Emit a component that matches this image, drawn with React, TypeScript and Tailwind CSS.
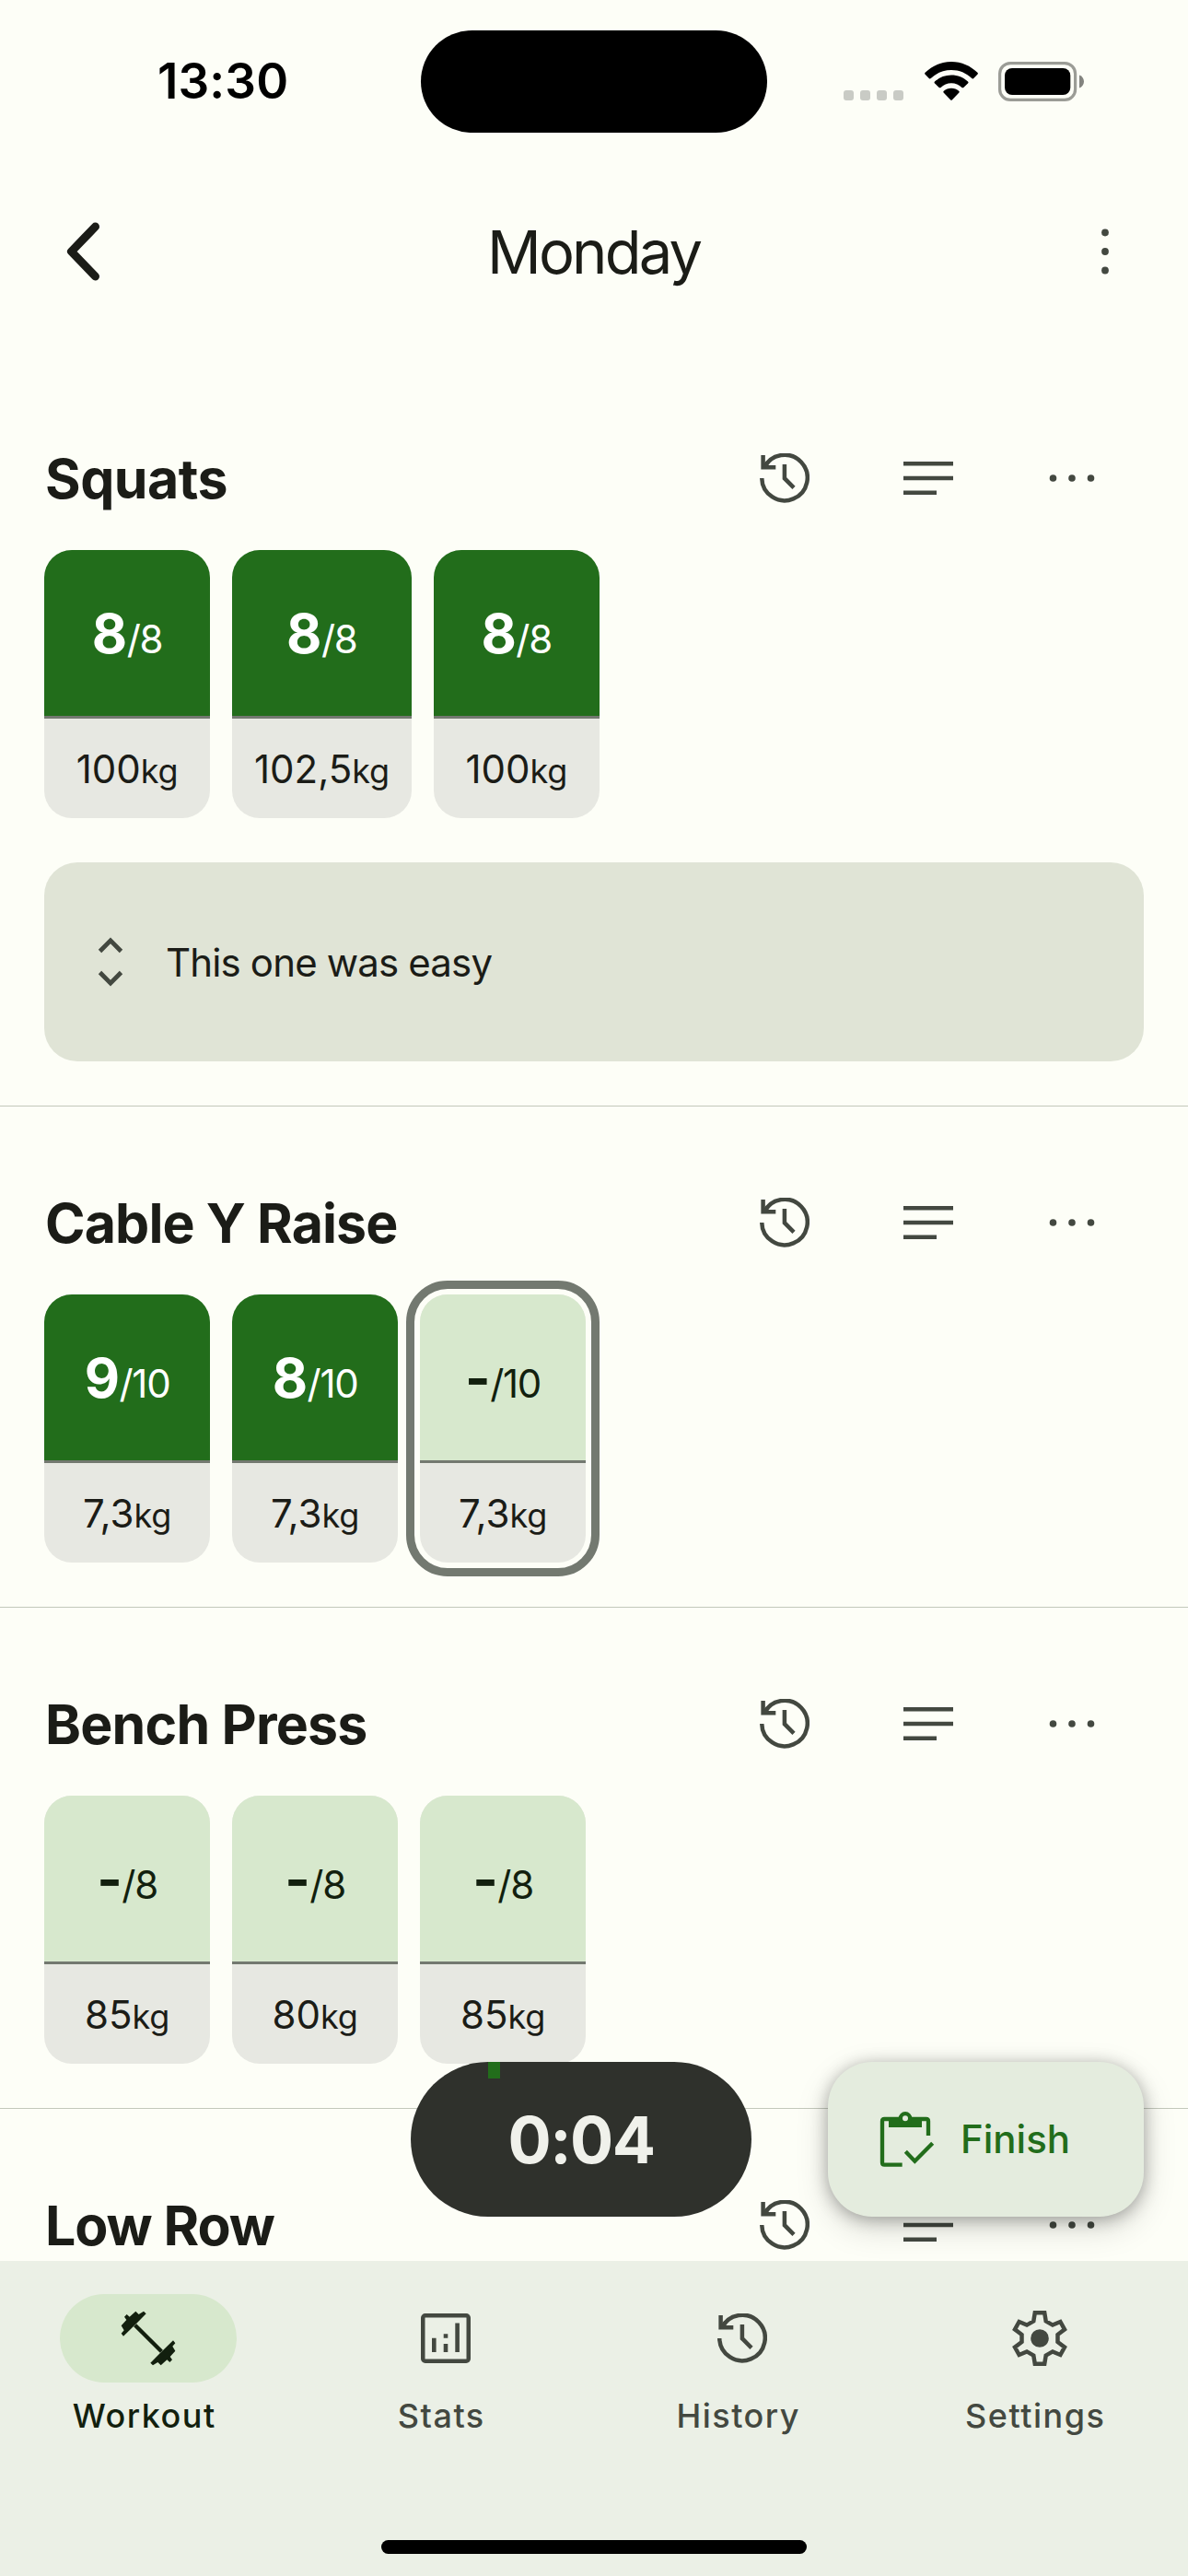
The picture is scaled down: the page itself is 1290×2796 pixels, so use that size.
import type { ReactNode } from "react";

type WorkoutSet = { done: string; goal: string; weight: string; active?: boolean };
type Exercise = { name: string; tracking: string; sets: WorkoutSet[]; note?: string };

const exercises: Exercise[] = [
  {
    name: "Squats",
    tracking: "tracking-[-0.5px]",
    sets: [
      { done: "8", goal: "8", weight: "100" },
      { done: "8", goal: "8", weight: "102,5" },
      { done: "8", goal: "8", weight: "100" },
    ],
    note: "This one was easy",
  },
  {
    name: "Cable Y Raise",
    tracking: "tracking-[-0.9px]",
    sets: [
      { done: "9", goal: "10", weight: "7,3" },
      { done: "8", goal: "10", weight: "7,3" },
      { done: "-", goal: "10", weight: "7,3", active: true },
    ],
  },
  {
    name: "Bench Press",
    tracking: "tracking-[-0.8px]",
    sets: [
      { done: "-", goal: "8", weight: "85" },
      { done: "-", goal: "8", weight: "80" },
      { done: "-", goal: "8", weight: "85" },
    ],
  },
  { name: "Low Row", tracking: "tracking-[-1.1px]", sets: [] },
];

function HistoryIcon() {
  return (
    <svg width="54" height="54" viewBox="0 0 54 54" fill="none" stroke="currentColor" strokeWidth="4.5">
      <path d="M2.25 27A24.75 24.75 0 1 0 4.6 16" />
      <path d="M3.6 2V15.3H17.3" />
      <path d="M5 15L9 9.5" />
      <path d="M26.9 12V27.2L37 37.3" />
    </svg>
  );
}

function NotesIcon() {
  return (
    <svg width="54" height="36" viewBox="0 0 54 36" fill="currentColor">
      <path d="M0 0H54V4.5H0ZM0 15.75H54V20.25H0ZM0 31.5H36V36H0Z" />
    </svg>
  );
}

function DotsIcon() {
  return (
    <svg width="50" height="8" viewBox="0 0 50 8" fill="currentColor">
      <circle cx="4.5" cy="4" r="3.8" />
      <circle cx="25" cy="4" r="3.8" />
      <circle cx="45.5" cy="4" r="3.8" />
    </svg>
  );
}

function DumbbellIcon() {
  const head = "112,86 122,96 138,86 146,94 118,122 72,167 65,158 74,148 65,133 82,114 75,104 83,96 92,104";
  return (
    <svg width="60" height="60" viewBox="63 84 180 180" fill="currentColor">
      <polygon points={head} />
      <polygon points={head} transform="rotate(180 153 174)" />
      <path d="M110 131L196 217" stroke="currentColor" strokeWidth="13" />
    </svg>
  );
}

function StatsIcon() {
  return (
    <svg width="54" height="54" viewBox="0 0 54 54" fill="currentColor">
      <rect x="2.25" y="2.25" width="49.5" height="49.5" rx="2.5" fill="none" stroke="currentColor" strokeWidth="4.5" />
      <path d="M12 26.8h4.6V42H12ZM24.7 22.2h4.6v4.6h-4.6ZM24.7 33h4.6v9h-4.6ZM37.3 10.5h4.6V42h-4.6Z" />
    </svg>
  );
}

function GearIcon() {
  return (
    <svg width="60" height="60" viewBox="-30 -30 60 60" fill="currentColor">
      <path
        d="M-5.2-27.75H5.2L6.7-18.6L14-14.4L22.4-18L27-9.7L19.5-4V4L27 9.7L22.4 18L14 14.4L6.7 18.6L5.2 27.75H-5.2L-6.7 18.6L-14 14.4L-22.4 18L-27 9.7L-19.5 4V-4L-27-9.7L-22.4-18L-14-14.4L-6.7-18.6Z"
        fill="none"
        stroke="currentColor"
        strokeWidth="4.5"
      />
      <circle r="9.8" />
    </svg>
  );
}

function ClipboardCheckIcon() {
  return (
    <svg width="60" height="62" viewBox="45 54 180 186" fill="none" stroke="currentColor" strokeWidth="13">
      <path d="M204 135V88q0-7-7-7H61q-7 0-7 7V223q0 7 7 7H119" />
      <path d="M75 80H183V108H75Z" fill="currentColor" stroke="none" />
      <circle cx="129" cy="79" r="15.5" fill="#e4ecde" />
      <path d="M130 187L160 218L218 160" />
    </svg>
  );
}

function StatusBar() {
  return (
    <div className="flex h-[177px] shrink-0 items-center">
      <div className="w-[457px] pl-[171px] text-[53px] leading-none font-semibold tracking-[0.1px] text-black">13:30</div>
      <div className="h-[111px] w-[376px] rounded-full bg-black" />
      <div className="ml-[83px] flex h-[43px] items-end">
        <div className="mb-px flex gap-[7px]">
          {[0, 1, 2, 3].map((i) => (
            <span key={i} className="h-[11px] w-[11px] rounded-[3px] bg-[#c9cbc5]" />
          ))}
        </div>
        <svg className="mb-px ml-[23px]" width="58" height="42" viewBox="0 0 58 42" fill="currentColor">
          <path d="M29 0C18 0 8 4.5.6 11.8q-1 1 0 2L5 18.2q.8.8 1.8-.1C12.600 12.300 20.400 9 29 9s16.400 3.300 22.200 9.100q1 .9 1.800.1l4.400-4.400q1-1 0-2C50 4.500 40 0 29 0Z" />
          <path d="M29 14.500c-6.900 0-13.200 2.600-18 7q-1 1 0 2l4.700 4.400q.9.900 1.900 0c3-2.800 7-4.600 11.400-4.600s8.400 1.800 11.400 4.600q1 .9 1.900 0l4.700-4.400q1-1 0-2c-4.800-4.400-11.100-7-18-7Z" />
          <path d="M29 28.700c-3.100 0-6 1.100-8.200 3q-1 1 0 2l7.200 7.600q1 1 2 0l7.200-7.600q1-1 0-2c-2.200-1.900-5.100-3-8.200-3Z" />
        </svg>
        <svg className="ml-[22px]" width="94" height="43" viewBox="0 0 94 43">
          <rect x="1.600" y="1.600" width="82" height="39.800" rx="11.500" fill="none" stroke="#9b9c96" strokeWidth="3.200" />
          <rect x="7" y="7" width="71.300" height="29" rx="8" fill="#000" />
          <path d="M88 14.500c3 1 5 3.800 5 7s-2 6-5 7Z" fill="#83847f" />
        </svg>
      </div>
    </div>
  );
}

function TopBar() {
  return (
    <div className="flex h-[192px] shrink-0 items-center pl-[72px]">
      <svg width="37" height="64" viewBox="0 0 37 64" fill="none" stroke="#1b1c17" strokeWidth="9" strokeLinecap="round" strokeLinejoin="round">
        <path d="M31.500 5L5.500 32L31.500 59" />
      </svg>
      <h1 className="ml-[420px] w-[639px] text-[65px] leading-none tracking-[-2.800px] text-[#1b1c17]">Monday</h1>
      <svg className="ml-[28px]" width="8" height="50" viewBox="0 0 8 50" fill="#434840">
        <circle cx="4" cy="4.500" r="3.900" />
        <circle cx="4" cy="25" r="3.900" />
        <circle cx="4" cy="45.500" r="3.900" />
      </svg>
    </div>
  );
}

function SetCard({ set }: { set: WorkoutSet }) {
  const pending = set.done === "-";
  return (
    <div className="relative">
      {set.active && <div className="absolute -inset-[15px] rounded-[45px] border-[9px] border-[#737970]" />}
      <div className="relative min-w-[180px] overflow-hidden rounded-[30px] bg-[#e7e8e2]">
        <div
          className={
            pending
              ? "flex h-[180px] items-baseline justify-center bg-[#d7e8cd] text-[#121f0e]"
              : "flex h-[180px] items-baseline justify-center bg-[#226d1b] text-white"
          }
        >
          <span className="text-[59px] leading-[182px] font-bold tracking-[-0.500px]">{set.done}</span>
          <span className="text-[42px] tracking-[-1.300px]">/{set.goal}</span>
        </div>
        <div className="h-[3px] bg-[#737970]" />
        <div className="flex h-[108px] items-baseline justify-center px-6 text-[#1b1c17]">
          <span className="text-[42px] leading-[110px]">{set.weight}</span>
          <span className="text-[36px] tracking-[-0.300px]">kg</span>
        </div>
      </div>
    </div>
  );
}

function ExerciseSection({ exercise }: { exercise: Exercise }) {
  return (
    <section className="border-b border-[#c3c8bb] pt-[54px] pb-12">
      <div className="flex h-[144px] items-center pr-[101px] pl-[49px] text-[#434840]">
        <h2 className={`flex-1 pt-px text-[59px] leading-none font-bold text-[#1b1c17] ${exercise.tracking}`}>{exercise.name}</h2>
        <div className="flex items-center">
          <HistoryIcon />
          <div className="ml-[102px]">
            <NotesIcon />
          </div>
          <div className="ml-[104px]">
            <DotsIcon />
          </div>
        </div>
      </div>
      <div className="mt-[6px] flex gap-6 px-12">
        {exercise.sets.map((set, i) => (
          <SetCard key={i} set={set} />
        ))}
      </div>
      {exercise.note && (
        <div className="mx-12 mt-12 flex h-[216px] items-center rounded-[36px] bg-[#e0e4d6] pl-[58px]">
          <svg width="28" height="54" viewBox="0 0 28 54" fill="none" stroke="#434840" strokeWidth="4.800">
            <path d="M2.500 15.500L14 3.800L25.500 15.500M2.500 38.500L14 50.200L25.500 38.500" />
          </svg>
          <p className="ml-[46px] pt-[2px] text-[42px] leading-none tracking-[-0.850px] text-[#1b1c17]">{exercise.note}</p>
        </div>
      )}
    </section>
  );
}

function NavItem({ icon, label, active = false }: { icon: ReactNode; label: string; active?: boolean }) {
  return (
    <div className={active ? "flex flex-1 flex-col items-center text-[#121f0e]" : "flex flex-1 flex-col items-center text-[#434840]"}>
      <div className={active ? "flex h-24 w-48 items-center justify-center rounded-full bg-[#d7e8cd]" : "flex h-24 w-48 items-center justify-center"}>
        {icon}
      </div>
      <span className="mt-[11px] mr-[9px] text-[36px] leading-[50px] font-medium tracking-[1.500px]">{label}</span>
    </div>
  );
}

export default function App() {
  return (
    <div className="flex h-[2796px] w-[1290px] flex-col overflow-hidden bg-[#fdfef7] font-['Inter',sans-serif]">
      <StatusBar />
      <TopBar />
      <main className="relative min-h-0 flex-1 overflow-hidden pt-6">
        {exercises.map((exercise) => (
          <ExerciseSection key={exercise.name} exercise={exercise} />
        ))}
        <div className="absolute inset-x-0 bottom-12 flex justify-end gap-[83px] pr-12">
          <div className="relative flex h-[168px] w-[370px] items-center justify-center overflow-hidden rounded-full bg-[#2f312c] text-[70px] font-bold tracking-[-1.500px] text-[#f0f1eb]">
            <span className="absolute top-0 left-[84px] h-[18px] w-[13px] bg-[#226d1b]" />
            0:04
          </div>
          <button className="flex h-[168px] w-[343px] items-center rounded-[48px] bg-[#e4ecde] pl-[56px] text-[#226d1b] shadow-[0_12px_36px_rgba(0,0,0,0.15),0_3px_18px_rgba(0,0,0,0.3)]">
            <ClipboardCheckIcon />
            <span className="ml-[28px] text-[42px] leading-none font-medium">Finish</span>
          </button>
        </div>
      </main>
      <nav className="flex h-[342px] shrink-0 flex-col bg-[#ebf0e6] pt-9">
        <div className="flex">
          <NavItem icon={<DumbbellIcon />} label="Workout" active />
          <NavItem icon={<StatsIcon />} label="Stats" />
          <NavItem icon={<HistoryIcon />} label="History" />
          <NavItem icon={<GearIcon />} label="Settings" />
        </div>
        <div className="mt-auto mb-6 h-[15px] w-[462px] self-center rounded-full bg-black" />
      </nav>
    </div>
  );
}
